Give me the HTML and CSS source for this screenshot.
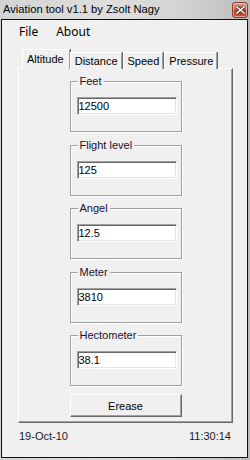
FILE: index.html
```html
<!DOCTYPE html>
<html lang="en">
<head>
  <meta charset="UTF-8" />
  <title>Aviation tool v1.1 by Zsolt Nagy</title>
  <link rel="stylesheet" href="styles.css">
</head>
<body>
  <div class="titlebar">
    <span class="title">Aviation tool v1.1 by Zsolt Nagy</span>
    <button class="close" aria-label="Close">
      <svg width="9" height="8" viewBox="0 0 9 8">
        <path d="M1 1 L8 7 M8 1 L1 7" stroke="#3a2a28" stroke-width="3.2" stroke-linecap="square" />
        <path d="M1 1 L8 7 M8 1 L1 7" stroke="#fff" stroke-width="1.6" stroke-linecap="square" />
      </svg>
    </button>
  </div>

  <div class="window">
    <div class="menu">
      <span>File</span>
      <span>About</span>
    </div>

    <div class="tabs">
      <span class="tab active">Altitude</span>
      <span class="tab">Distance</span>
      <span class="tab">Speed</span>
      <span class="tab">Pressure</span>
    </div>

    <div class="panel">
      <div class="group">
        <span class="group-label">Feet</span>
        <input class="field" type="text" value="12500">
      </div>
      <div class="group">
        <span class="group-label">Flight level</span>
        <input class="field" type="text" value="125">
      </div>
      <div class="group">
        <span class="group-label">Angel</span>
        <input class="field" type="text" value="12.5">
      </div>
      <div class="group">
        <span class="group-label">Meter</span>
        <input class="field" type="text" value="3810">
      </div>
      <div class="group">
        <span class="group-label">Hectometer</span>
        <input class="field" type="text" value="38.1">
      </div>
      <button class="erase">Erease</button>
    </div>

    <div class="status">
      <span>19-Oct-10</span>
      <span>11:30:14</span>
    </div>
  </div>
</body>
</html>
```

FILE: styles.css
```css
* { box-sizing: border-box; }

body {
  margin: 0;
  width: 250px;
  height: 460px;
  overflow: hidden;
  background: linear-gradient(to right, #d3d3d3, #dedede 45%, #d2d2d2 75%, #bcbcbc);
  font-family: "Liberation Sans", Arial, sans-serif;
  font-size: 11px;
  color: #000;
}

.titlebar {
  height: 19px;
  display: flex;
  align-items: center;
  justify-content: space-between;
  padding: 0 2px 0 3px;
}

.title {
  font-family: "Liberation Sans", Arial, sans-serif;
  font-size: 11.2px;
  color: #000;
  line-height: 19px;
}

.close {
  width: 16px;
  height: 16px;
  margin-top: 1px;
  padding: 0;
  border: 1px solid #8a3a2c;
  border-radius: 3px;
  background: linear-gradient(to bottom, #e49a86, #d0603f 45%, #b8391c 55%, #c55a3c);
  box-shadow: inset 0 0 0 1px rgba(255, 255, 255, 0.45);
  display: flex;
  align-items: center;
  justify-content: center;
}

.window {
  margin-left: 1px;
  width: 247px;
  height: 439px;
  border: 1px solid #111;
  background: #f0f0f0;
}

.menu {
  height: 24px;
  display: flex;
  gap: 18px;
  padding-left: 17px;
  font-family: "Noto Sans", sans-serif;
  font-size: 12px;
  line-height: 24px;
}

.tabs {
  display: flex;
  align-items: flex-end;
  margin: 5px 0 -1px 20px;
  height: 20px;
  position: relative;
  z-index: 1;
}

.tab {
  height: 17px;
  line-height: 16px;
  padding: 0 3px 0 4px;
  border-top: 1px solid #fff;
  border-left: 1px solid #fff;
  border-right: 1px solid #a0a0a0;
  box-shadow: 1px 0 0 #696969;
  margin-right: 1px;
  background: #f0f0f0;
}

.tab.active {
  height: 20px;
  padding: 0 5px 0 4px;
  margin-right: 0;
  line-height: 19px;
}

.panel {
  margin-left: 16px;
  width: 215px;
  height: 355px;
  border-top: 1px solid #fff;
  border-left: 1px solid #fff;
  border-right: 1px solid #696969;
  border-bottom: 1px solid #696969;
  box-shadow: inset -1px -1px 0 #a0a0a0;
  display: flex;
  flex-direction: column;
  align-items: center;
  padding-top: 12px;
}

.group {
  position: relative;
  width: 112px;
  height: 51px;
  border: 1px solid #a0a0a0;
  box-shadow: inset 1px 1px 0 #fff, 1px 1px 0 #fff;
  padding: 15px 0 0 6px;
  margin-bottom: 12.5px;
}

.group-label {
  position: absolute;
  top: -8px;
  left: 7px;
  padding: 0 2px;
  background: #f0f0f0;
  line-height: 14px;
  color: #1a1030;
}

.field {
  display: block;
  width: 100px;
  height: 18px;
  padding: 0 1px;
  font-family: "Liberation Sans", Arial, sans-serif;
  font-size: 11px;
  color: #000;
  background: #fff;
  border-style: solid;
  border-width: 1px;
  border-color: #a0a0a0 #fff #fff #a0a0a0;
  box-shadow: inset 1px 1px 0 #696969, inset -1px -1px 0 #e3e3e3;
  outline: none;
}

.erase {
  width: 112px;
  height: 23px;
  margin-top: -4.5px;
  padding: 0;
  font-family: "Liberation Sans", Arial, sans-serif;
  font-size: 11px;
  color: #000;
  background: #f0f0f0;
  border-style: solid;
  border-width: 1px;
  border-color: #fff #696969 #696969 #fff;
  box-shadow: inset -1px -1px 0 #a0a0a0;
}

.status {
  display: flex;
  justify-content: space-between;
  padding: 7px 16px 0 17px;
  line-height: 13px;
  color: #1a1a1a;
}
```
